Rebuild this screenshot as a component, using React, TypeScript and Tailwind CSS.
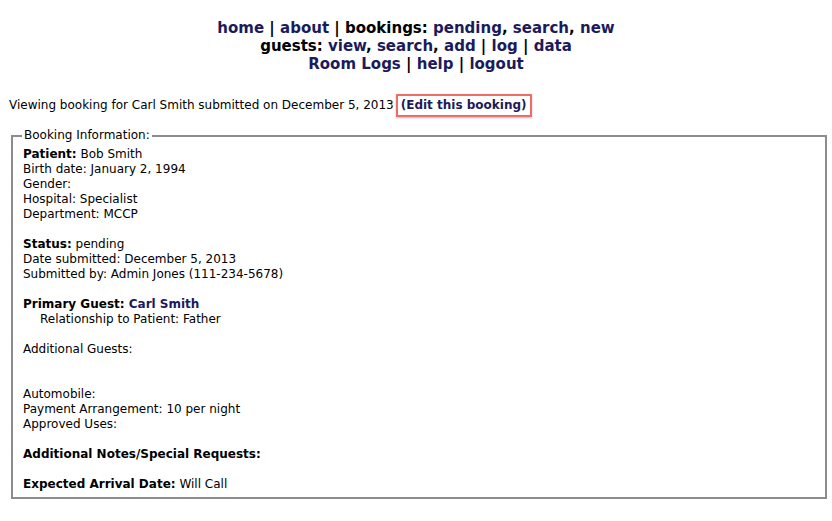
import React from 'react';

const link = 'text-[#1b1b5c] no-underline';

export default function App() {
  return (
    <div className="min-h-[521px] bg-white px-[9px] pt-[19px] text-[12px] leading-[15px] text-black" style={{ fontFamily: 'Verdana, "DejaVu Sans", sans-serif' }}>
      {/* top navigation */}
      <div className="text-center text-[15px] font-bold leading-[18px]">
        <div>
          <a className={link}>home</a> | <a className={link}>about</a> | bookings:{' '}
          <a className={link}>pending</a>, <a className={link}>search</a>, <a className={link}>new</a>
        </div>
        <div>
          guests: <a className={link}>view</a>, <a className={link}>search</a>, <a className={link}>add</a> |{' '}
          <a className={link}>log</a> | <a className={link}>data</a>
        </div>
        <div>
          <a className={link}>Room Logs</a> | <a className={link}>help</a> | <a className={link}>logout</a>
        </div>
      </div>

      <p className="mt-[21px] flex items-center">
        Viewing booking for Carl Smith submitted on December 5, 2013
        <span className="ml-[2px] border-2 border-[#ec6e64] px-[3px] py-[2px] font-bold text-[#1b1b5c] shadow-[0_1px_2px_rgba(0,0,0,0.25)]">
          (Edit this booking)
        </span>
      </p>

      <fieldset className="-mr-[4px] ml-[2px] mt-[11px] border-2 border-[#8c8c8c] px-[10px] pb-[5px] pt-[4px]">
        <legend className="-ml-[1px] px-[2px]">Booking Information:</legend>
        <div><b>Patient:</b> Bob Smith</div>
        <div>Birth date: January 2, 1994</div>
        <div>Gender:</div>
        <div>Hospital: Specialist</div>
        <div>Department: MCCP</div>
        <div className="h-[15px]" />
        <div><b>Status:</b> pending</div>
        <div>Date submitted: December 5, 2013</div>
        <div>Submitted by: Admin Jones (111-234-5678)</div>
        <div className="h-[15px]" />
        <div><b>Primary Guest: <a className={link}>Carl Smith</a></b></div>
        <div className="pl-[17px]">Relationship to Patient: Father</div>
        <div className="h-[15px]" />
        <div>Additional Guests:</div>
        <div className="h-[30px]" />
        <div>Automobile:</div>
        <div>Payment Arrangement: 10 per night</div>
        <div>Approved Uses:</div>
        <div className="h-[15px]" />
        <div><b>Additional Notes/Special Requests:</b></div>
        <div className="h-[15px]" />
        <div><b>Expected Arrival Date:</b> Will Call</div>
      </fieldset>
    </div>
  );
}
